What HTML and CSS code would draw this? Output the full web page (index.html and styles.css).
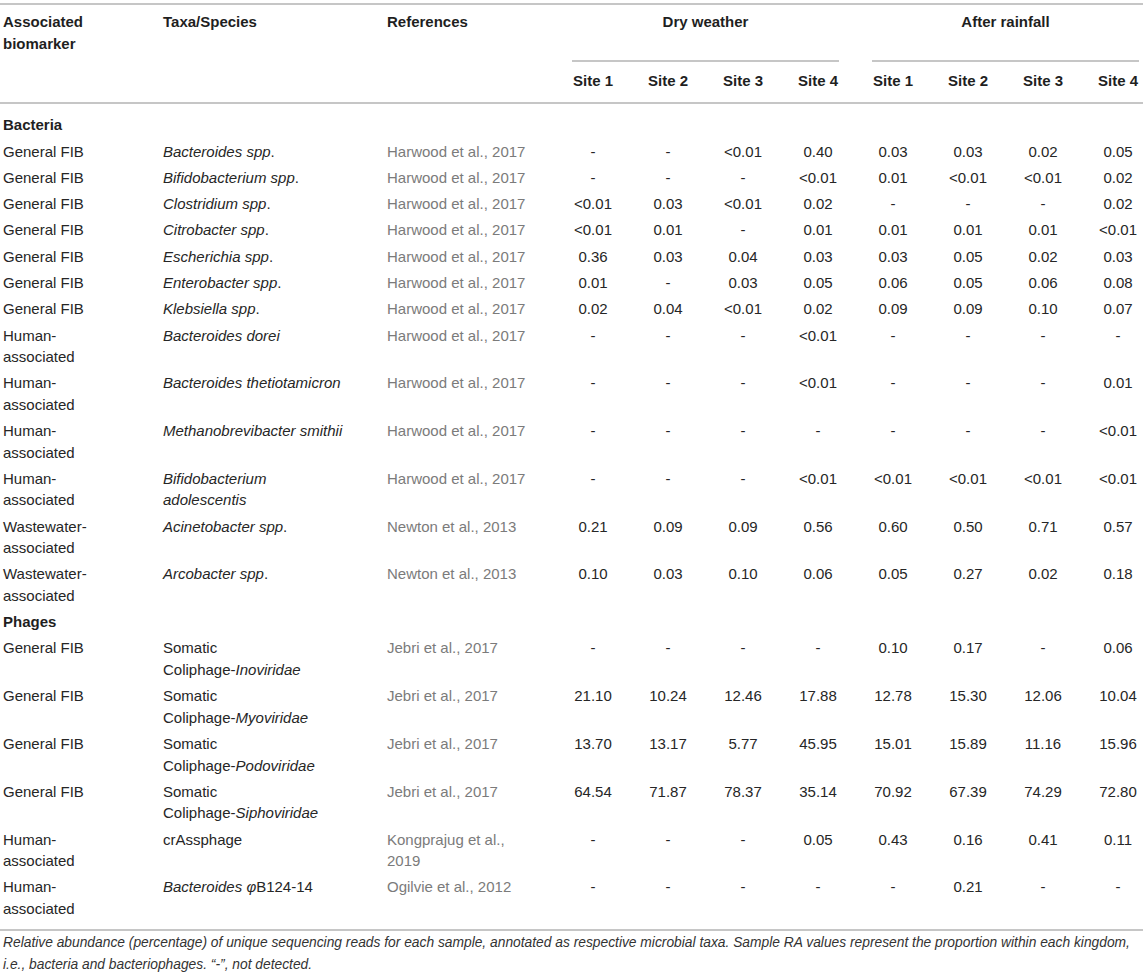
FILE: index.html
```html
<!DOCTYPE html>
<html lang="en">
<head>
<meta charset="utf-8">
<title>Relative abundance of microbial taxa</title>
<link rel="stylesheet" href="styles.css">
</head>
<body>
<div class="table-wrap">
<table class="data">
<colgroup>
<col class="w-marker"><col class="w-taxa"><col class="w-ref">
<col class="w-site"><col class="w-site"><col class="w-site"><col class="w-site">
<col class="w-site"><col class="w-site"><col class="w-site"><col class="w-last">
</colgroup>
<thead>
<tr>
<th rowspan="2" class="lead lead-first">Associated biomarker</th>
<th rowspan="2" class="lead lead-taxa">Taxa/Species</th>
<th rowspan="2" class="lead lead-ref">References</th>
<th colspan="4" class="group"><span class="group-label">Dry weather</span></th>
<th colspan="4" class="group group-last"><span class="group-label">After rainfall</span></th>
</tr>
<tr>
<th class="site">Site 1</th><th class="site">Site 2</th><th class="site">Site 3</th><th class="site">Site 4</th>
<th class="site">Site 1</th><th class="site">Site 2</th><th class="site">Site 3</th><th class="site site-last">Site 4</th>
</tr>
</thead>
<tbody>
<tr class="section section-first"><td colspan="11">Bacteria</td></tr>
<tr><td>General FIB</td><td><i>Bacteroides spp</i>.</td><td>Harwood et al., 2017</td><td>-</td><td>-</td><td>&lt;0.01</td><td>0.40</td><td>0.03</td><td>0.03</td><td>0.02</td><td>0.05</td></tr>
<tr><td>General FIB</td><td><i>Bifidobacterium spp</i>.</td><td>Harwood et al., 2017</td><td>-</td><td>-</td><td>-</td><td>&lt;0.01</td><td>0.01</td><td>&lt;0.01</td><td>&lt;0.01</td><td>0.02</td></tr>
<tr><td>General FIB</td><td><i>Clostridium spp</i>.</td><td>Harwood et al., 2017</td><td>&lt;0.01</td><td>0.03</td><td>&lt;0.01</td><td>0.02</td><td>-</td><td>-</td><td>-</td><td>0.02</td></tr>
<tr><td>General FIB</td><td><i>Citrobacter spp</i>.</td><td>Harwood et al., 2017</td><td>&lt;0.01</td><td>0.01</td><td>-</td><td>0.01</td><td>0.01</td><td>0.01</td><td>0.01</td><td>&lt;0.01</td></tr>
<tr><td>General FIB</td><td><i>Escherichia spp</i>.</td><td>Harwood et al., 2017</td><td>0.36</td><td>0.03</td><td>0.04</td><td>0.03</td><td>0.03</td><td>0.05</td><td>0.02</td><td>0.03</td></tr>
<tr><td>General FIB</td><td><i>Enterobacter spp</i>.</td><td>Harwood et al., 2017</td><td>0.01</td><td>-</td><td>0.03</td><td>0.05</td><td>0.06</td><td>0.05</td><td>0.06</td><td>0.08</td></tr>
<tr><td>General FIB</td><td><i>Klebsiella spp</i>.</td><td>Harwood et al., 2017</td><td>0.02</td><td>0.04</td><td>&lt;0.01</td><td>0.02</td><td>0.09</td><td>0.09</td><td>0.10</td><td>0.07</td></tr>
<tr><td>Human-associated</td><td><i>Bacteroides dorei</i></td><td>Harwood et al., 2017</td><td>-</td><td>-</td><td>-</td><td>&lt;0.01</td><td>-</td><td>-</td><td>-</td><td>-</td></tr>
<tr><td>Human-associated</td><td><i>Bacteroides thetiotamicron</i></td><td>Harwood et al., 2017</td><td>-</td><td>-</td><td>-</td><td>&lt;0.01</td><td>-</td><td>-</td><td>-</td><td>0.01</td></tr>
<tr><td>Human-associated</td><td><i>Methanobrevibacter smithii</i></td><td>Harwood et al., 2017</td><td>-</td><td>-</td><td>-</td><td>-</td><td>-</td><td>-</td><td>-</td><td>&lt;0.01</td></tr>
<tr><td>Human-associated</td><td><i>Bifidobacterium<br>adolescentis</i></td><td>Harwood et al., 2017</td><td>-</td><td>-</td><td>-</td><td>&lt;0.01</td><td>&lt;0.01</td><td>&lt;0.01</td><td>&lt;0.01</td><td>&lt;0.01</td></tr>
<tr><td>Wastewater-associated</td><td><i>Acinetobacter spp</i>.</td><td>Newton et al., 2013</td><td>0.21</td><td>0.09</td><td>0.09</td><td>0.56</td><td>0.60</td><td>0.50</td><td>0.71</td><td>0.57</td></tr>
<tr><td>Wastewater-associated</td><td><i>Arcobacter spp</i>.</td><td>Newton et al., 2013</td><td>0.10</td><td>0.03</td><td>0.10</td><td>0.06</td><td>0.05</td><td>0.27</td><td>0.02</td><td>0.18</td></tr>
<tr class="section"><td colspan="11">Phages</td></tr>
<tr><td>General FIB</td><td>Somatic<br>Coliphage-<i>Inoviridae</i></td><td>Jebri et al., 2017</td><td>-</td><td>-</td><td>-</td><td>-</td><td>0.10</td><td>0.17</td><td>-</td><td>0.06</td></tr>
<tr><td>General FIB</td><td>Somatic<br>Coliphage-<i>Myoviridae</i></td><td>Jebri et al., 2017</td><td>21.10</td><td>10.24</td><td>12.46</td><td>17.88</td><td>12.78</td><td>15.30</td><td>12.06</td><td>10.04</td></tr>
<tr><td>General FIB</td><td>Somatic<br>Coliphage-<i>Podoviridae</i></td><td>Jebri et al., 2017</td><td>13.70</td><td>13.17</td><td>5.77</td><td>45.95</td><td>15.01</td><td>15.89</td><td>11.16</td><td>15.96</td></tr>
<tr><td>General FIB</td><td>Somatic<br>Coliphage-<i>Siphoviridae</i></td><td>Jebri et al., 2017</td><td>64.54</td><td>71.87</td><td>78.37</td><td>35.14</td><td>70.92</td><td>67.39</td><td>74.29</td><td>72.80</td></tr>
<tr><td>Human-associated</td><td>crAssphage</td><td>Kongprajug et al., 2019</td><td>-</td><td>-</td><td>-</td><td>0.05</td><td>0.43</td><td>0.16</td><td>0.41</td><td>0.11</td></tr>
<tr class="row-last"><td>Human-associated</td><td><i>Bacteroides φ</i>B124-14</td><td>Ogilvie et al., 2012</td><td>-</td><td>-</td><td>-</td><td>-</td><td>-</td><td>0.21</td><td>-</td><td>-</td></tr>
</tbody>
</table>
</div>
<p class="note">Relative abundance (percentage) of unique sequencing reads for each sample, annotated as respective microbial taxa. Sample RA values represent the proportion within each kingdom, i.e., bacteria and bacteriophages. “-”, not detected.</p>
</body>
</html>
```
FILE: styles.css
```css
body {
  margin: 0;
  background: #ffffff;
  color: #262626;
  font-family: "Liberation Sans", Arial, Helvetica, sans-serif;
}

.table-wrap {
  margin-top: 3px;
  border-top: 2px solid #c6c6c6;
  border-bottom: 2px solid #c6c6c6;
}

.data {
  width: 1143px;
  table-layout: fixed;
  border-collapse: separate;
  border-spacing: 0;
  font-size: 15px;
  line-height: 21.5px;
}

.w-marker { width: 163px; }
.w-taxa { width: 224px; }
.w-ref { width: 185px; }
.w-site { width: 75px; }
.w-last { width: 46px; }

.data th {
  font-weight: 700;
  color: #1f1f1f;
  text-align: left;
  vertical-align: top;
}

.data th.lead {
  padding: 6px 0 0 0;
  border-bottom: 2px solid #c6c6c6;
}

.data th.lead-first { padding-left: 3px; padding-right: 50px; }
.data th.lead-taxa { padding-right: 19px; }
.data th.lead-ref { padding-right: 40px; }

.data th.group {
  padding: 6px 33px 0 0;
  text-align: center;
}

.data th.group-last { padding-right: 4px; }

.group-label {
  display: block;
  padding-bottom: 27.5px;
  border-bottom: 2px solid #c6c6c6;
}

.data th.site {
  padding: 8px 33px 10.5px 0;
  text-align: center;
  border-bottom: 2px solid #c6c6c6;
}

.data th.site-last { padding-right: 4px; }

.data td {
  vertical-align: top;
  padding: 2.4px 33px 2.4px 0;
  text-align: center;
}

.data td:nth-child(1) {
  padding-left: 3px;
  padding-right: 50px;
  text-align: left;
}

.data td:nth-child(2) {
  padding-right: 19px;
  text-align: left;
}

.data td:nth-child(3) {
  padding-right: 40px;
  text-align: left;
  color: #7b7b7b;
}

.data td:nth-child(11) { padding-right: 4px; }

.data .section td {
  font-weight: 700;
  color: #1f1f1f;
  text-align: left;
  padding-left: 3px;
}

.data .section-first td { padding-top: 10.25px; }

.data .row-last td { padding-bottom: 9.5px; }

.note {
  margin: 0;
  padding: 1px 0 0 3px;
  font-size: 13.8px;
  line-height: 22px;
  font-style: italic;
  color: #333333;
}
```
